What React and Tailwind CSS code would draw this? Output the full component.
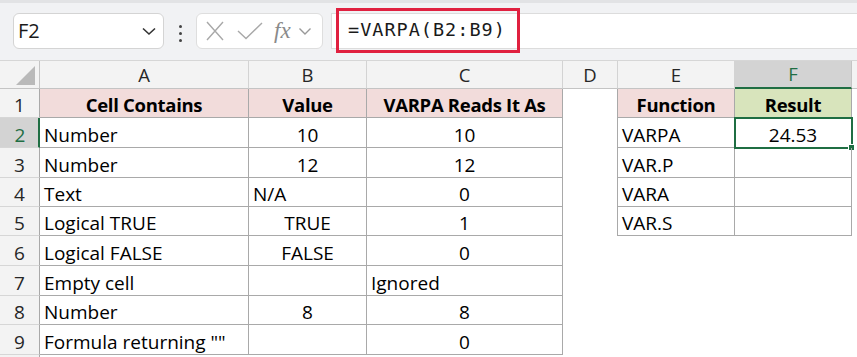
const cols = [
  { key: "A", w: "w-[209px]" },
  { key: "B", w: "w-[118px]" },
  { key: "C", w: "w-[196px]" },
  { key: "D", w: "w-[55px]" },
  { key: "E", w: "w-[117px]" },
  { key: "F", w: "w-[117px]" },
];

const rows = [
  { n: 1, h: "h-[29px]", a: "Cell Contains", b: "Value", c: "VARPA Reads It As", e: "Function", f: "Result", head: true },
  { n: 2, h: "h-[30px]", a: "Number", b: "10", c: "10", e: "VARPA", f: "24.53" },
  { n: 3, h: "h-[30px]", a: "Number", b: "12", c: "12", e: "VAR.P", f: "" },
  { n: 4, h: "h-[29px]", a: "Text", b: "N/A", bLeft: true, c: "0", e: "VARA", f: "" },
  { n: 5, h: "h-[29px]", a: "Logical TRUE", b: "TRUE", c: "1", e: "VAR.S", f: "" },
  { n: 6, h: "h-[30px]", a: "Logical FALSE", b: "FALSE", c: "0" },
  { n: 7, h: "h-[30px]", a: "Empty cell", b: "", c: "Ignored", cLeft: true },
  { n: 8, h: "h-[29px]", a: "Number", b: "8", c: "8" },
  { n: 9, h: "h-[30px]", a: 'Formula returning ""', b: "", c: "0" },
];

function Toolbar() {
  return (
    <div className="relative h-[61px] bg-[#f1f2f4] border-b border-[#d6d6d6]">
      <div className="h-[3px] bg-[#e2e3e5]" />
      <div className="flex items-start pt-[10px] pl-[13px]">
        <div className="flex items-center justify-between w-[151px] h-[36px] bg-white border border-[#d4d4d4] rounded-[6px] pl-[4px] pr-[6px]">
          <span className="text-[20px] text-[#1a1a1a] leading-none">F2</span>
          <svg width="16" height="10" viewBox="0 0 16 10">
            <path d="M2 2.5 L8 8 L14 2.5" fill="none" stroke="#333" strokeWidth="1.6" />
          </svg>
        </div>
        <div className="flex flex-col items-center gap-[4px] w-[32px] pt-[12px]">
          <span className="w-[3px] h-[3px] rounded-full bg-[#444]" />
          <span className="w-[3px] h-[3px] rounded-full bg-[#444]" />
          <span className="w-[3px] h-[3px] rounded-full bg-[#444]" />
        </div>
        <div className="flex items-center w-[127px] h-[36px] bg-white border border-[#dedede] rounded-[6px] pl-[8px]">
          <svg width="20" height="20" viewBox="0 0 20 20">
            <path d="M2 1 L18 19 M18 1 L2 19" fill="none" stroke="#a8a8a8" strokeWidth="1.4" />
          </svg>
          <svg width="26" height="18" viewBox="0 0 26 18" className="ml-[12px]">
            <path d="M1 9 L9 16.5 L25 1" fill="none" stroke="#a8a8a8" strokeWidth="1.4" />
          </svg>
          <span className="ml-[11px] text-[23px] italic text-[#8a8a8a] font-['Liberation_Serif',serif] leading-none -mt-[2px]">fx</span>
          <svg width="14" height="9" viewBox="0 0 14 9" className="ml-[7px]">
            <path d="M1.5 1.5 L7 7 L12.5 1.5" fill="none" stroke="#999" strokeWidth="1.4" />
          </svg>
        </div>
        <div className="relative ml-[8px] flex-1 h-[36px] bg-white border-y border-l border-[#dcdcdc]">
          <div className="absolute left-[4px] top-[-6px] w-[184px] h-[45px] border-[3px] border-[#e0203f] flex items-center pl-[9px]">
            <span className="font-['DejaVu_Sans_Mono',monospace] text-[18.5px] tracking-[1px] text-[#1a1a1a] leading-none">
              =VARPA(B2:B9)
            </span>
          </div>
        </div>
      </div>
    </div>
  );
}

function HeaderRow() {
  return (
    <div className="flex h-[28px] bg-[#f3f3f3]">
      <div className="relative w-[40px] h-full border-r border-b border-[#c4c4c4]">
        <svg width="40" height="28" viewBox="0 0 40 28" className="absolute inset-0">
          <polygon points="35,5 35,24 16,24" fill="#b9b9b9" />
        </svg>
      </div>
      {cols.map((c) => (
        <div
          key={c.key}
          className={
            c.key === "F"
              ? "w-[117px] h-full flex items-center justify-center bg-[#d3d3d3] text-[#1f6e43] border-r border-[#c4c4c4] border-b-2 border-b-[#1f6e43] text-[18.5px]"
              : c.w + " h-full flex items-center justify-center text-[#262626] border-r border-b border-[#d3d3d3] border-b-[#c4c4c4] text-[18.5px]"
          }
        >
          {c.key}
        </div>
      ))}
      <div className="flex-1 h-full border-b border-[#c4c4c4]" />
    </div>
  );
}

function Text({ children, left, bold }) {
  return (
    <span
      className={
        "w-full leading-[24px] whitespace-nowrap " +
        (left ? "text-left pl-[4px] " : "text-center ") +
        (bold ? "font-bold text-[18.5px] tracking-[-0.3px]" : "text-[19px]")
      }
    >
      {children}
    </span>
  );
}

function DataRow({ r }) {
  const sel = r.n === 2;
  const tbl = r.n <= 5;
  const cell = "h-full flex items-end border-r border-b border-[#a9a9a9] ";
  return (
    <div className={"flex " + r.h}>
      <div
        className={
          sel
            ? "w-[40px] h-full flex items-end justify-center bg-[#d3d3d3] text-[#1f6e43] border-r-2 border-r-[#1f6e43] border-b border-b-[#d6d6d6] pl-[2px]"
            : "w-[40px] h-full flex items-end justify-center bg-[#f3f3f3] text-[#262626] border-r border-r-[#a9a9a9] border-b border-b-[#d6d6d6]"
        }
      >
        <span className="text-[19px] leading-[24px]">{r.n}</span>
      </div>
      <div className={cell + "w-[209px] " + (r.head ? "bg-[#f2dcdb]" : "")}>
        <Text left={!r.head} bold={r.head}>{r.a}</Text>
      </div>
      <div className={cell + "w-[118px] " + (r.head ? "bg-[#f2dcdb]" : "")}>
        <Text left={r.bLeft} bold={r.head}>{r.b}</Text>
      </div>
      <div className={cell + "w-[196px] " + (r.head ? "bg-[#f2dcdb]" : "")}>
        <Text left={r.cLeft} bold={r.head}>{r.c}</Text>
      </div>
      <div className={"w-[55px] h-full " + (tbl ? "border-r border-[#a9a9a9]" : "")} />
      {tbl ? (
        <>
          <div className={cell + "w-[117px] " + (r.head ? "bg-[#f2dcdb]" : "")}>
            <Text left={!r.head} bold={r.head}>{r.e}</Text>
          </div>
          <div className={"relative " + cell + "w-[117px] " + (r.head ? "bg-[#d8e4bc]" : "")}>
            <Text bold={r.head}>{r.f}</Text>
            {sel && (
              <>
                <div className="absolute -left-[1px] -top-[1px] w-[119px] h-[32px] border-2 border-[#1f6e43]" />
                <div className="absolute -right-[4px] -bottom-[4px] w-[7px] h-[7px] bg-[#1f6e43] border border-white" />
              </>
            )}
          </div>
        </>
      ) : (
        <div className="w-[234px] h-full" />
      )}
    </div>
  );
}

export default function App() {
  return (
    <div className="w-[857px] h-[357px] overflow-hidden bg-white text-black font-['Open_Sans',sans-serif]">
      <Toolbar />
      <HeaderRow />
      {rows.map((r) => (
        <DataRow key={r.n} r={r} />
      ))}
      <div className="flex h-[30px]">
        <div className="w-[40px] h-full bg-[#f3f3f3] border-r border-[#a9a9a9]" />
      </div>
    </div>
  );
}
